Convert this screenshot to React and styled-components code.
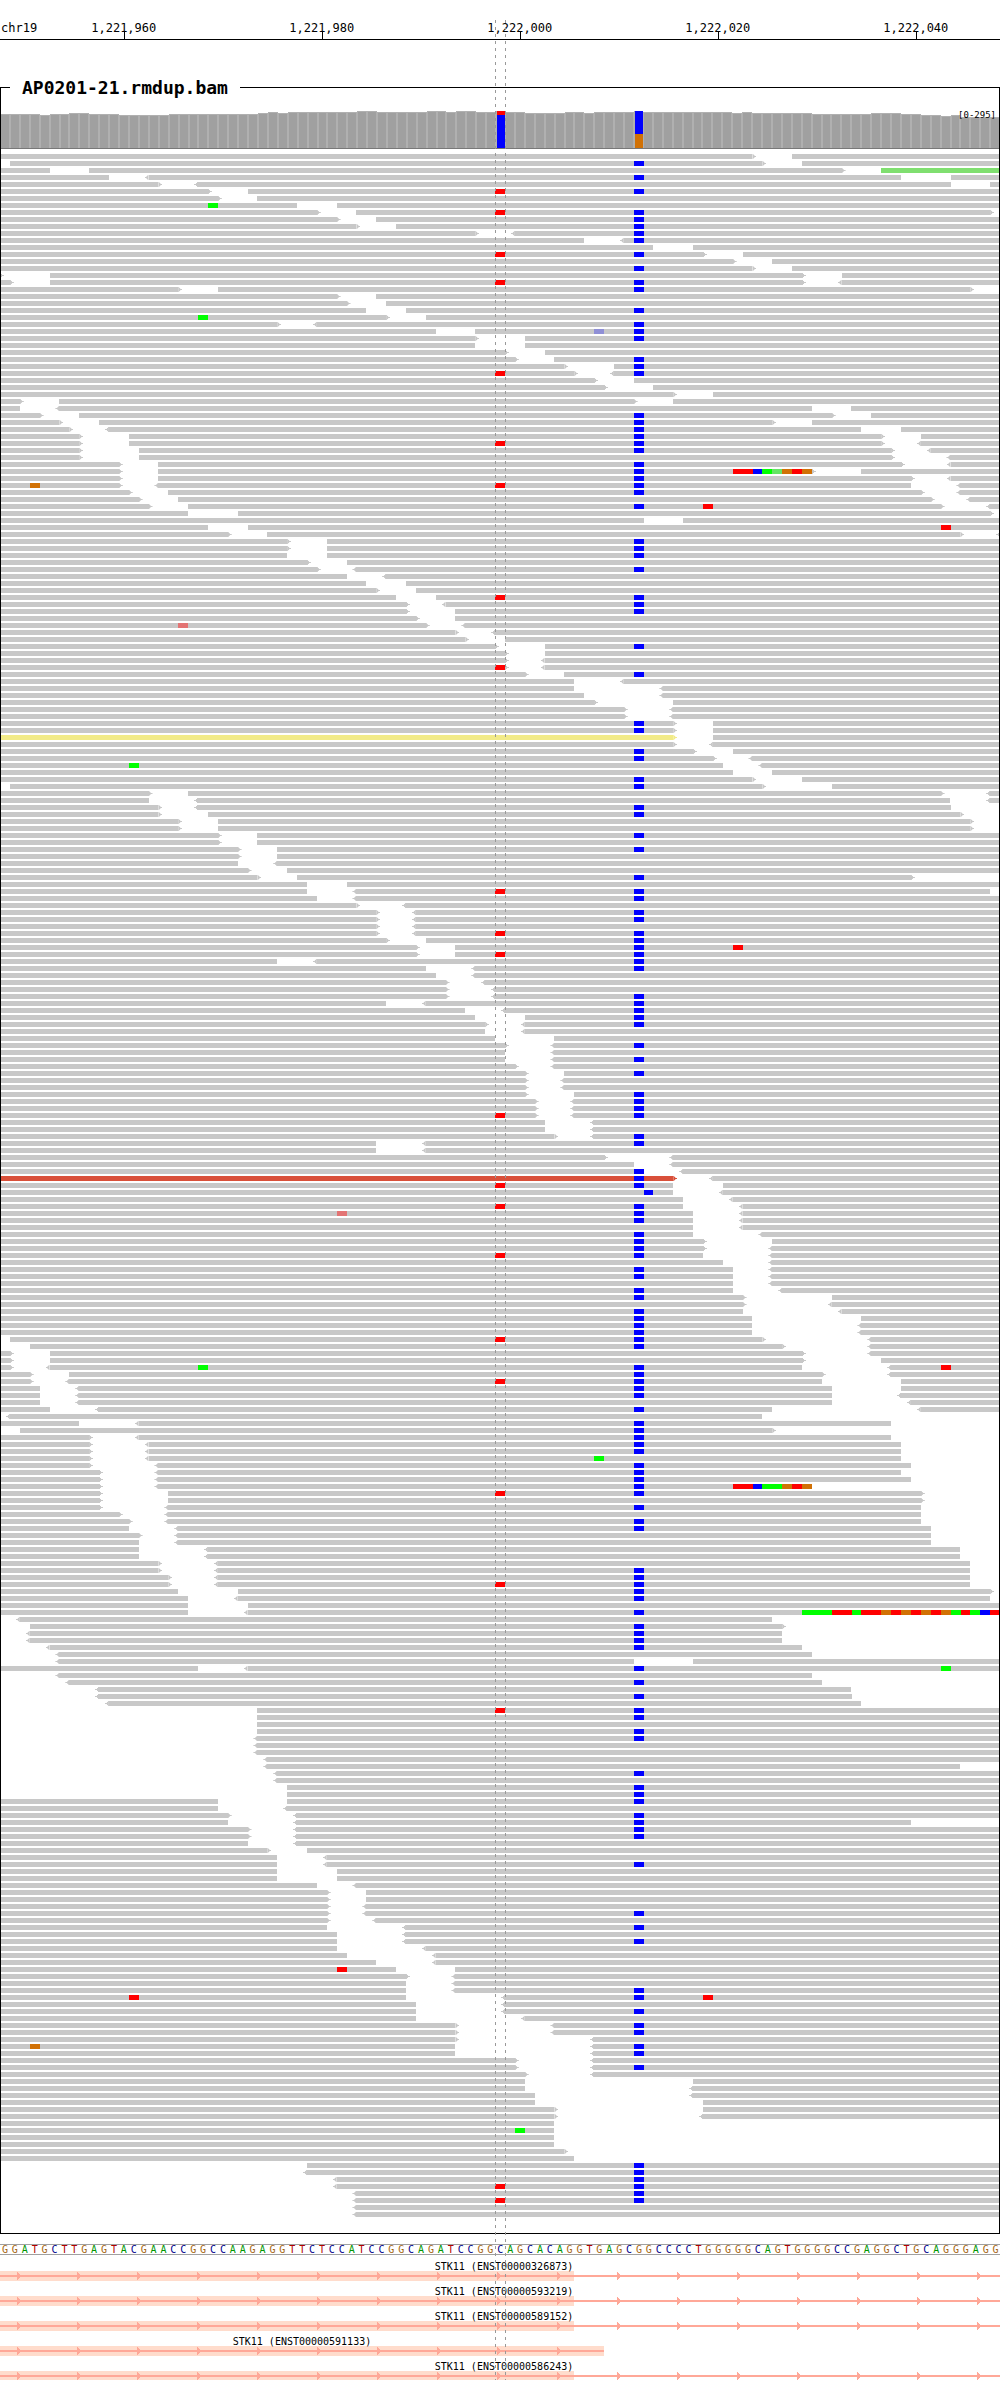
import React from "react";
import styled, { createGlobalStyle, css } from "styled-components";

const BASES = 101;
const percent = (bases) => `${(bases / BASES) * 100}%`;

const colors = {
  read: "#c8c8c8",
  a: "#00ff00",
  c: "#0000ff",
  g: "#d17105",
  t: "#ff0000",
  dimA: "#64e464",
  dimC: "#8f8fd6",
  dimT: "#e37474",
  pairGreen: "#80df70",
  pairYellow: "#f2eb88",
  pairRed: "#d9503a",
  intron: "#ffa898",
  exon: "#ffdccc",
};

const letterColors = { A: "#009600", C: "#00008b", G: "#a56510", T: "#b00000" };

/* ---------- data ---------- */

// One line per alignment row. "a-b" is an empty stretch from base a to base b;
// ">" marks a forward read ending there, "<" a reverse read starting there.
// "B" and "R" are the two recurrent variants; "x12" is a single mismatch.
const rowText = `
76>-80
0-1 77>-81 B
5-9 85>-89 P89-101
11-<15 91-96 B
16>-<20 96-100
21>-25 R B
22>-26
30-34 a21
32>-36 100>-101 R B
34>-38 B
36>-40 B
48>-<52 B
59-<63 B
66-70
71>-75 R B
74>-78
76>-80 B
0>-5 81>-85
1>-5 81>-<85 R B
18>-22 98>-101 B
34>-38
35>-39
37-41 B
39>-43 a20
28>-<32 B
44-48 C60 B
48>-53 B
48-53
51>-55
52>-56 B
57>-62 B
58>-<62 R B
60>-64
61>-66
68>-72
2>-6 64>-68
2-<6 82-86
4>-8 84>-88 B
6>-10 78>-82 B
7>-<11 87-91 B
8>-13 89>-93 B
8>-13 89>-<93 R B
8>-14 90>-<94 B
8>-14 90>-<96
12>-16 91>-<96 B
12>-16 82>-87 B t74 t75 c76 a77 A78 g79 t80 g81
12>-16 92>-<96 B
12>-<16 92-<97 g3 R B
13>-17 93>-<97 B
14>-18 94>-<98
15>-19 95>-<100 B t71
19-24 100>-101
65-69
21-25 t95
23>-27 97>-<101
29>-33 B
29>-33 B
29-33 B
31>-35
32>-<36 B
35-<39
37-41
38>-42
40-44 R B
41>-<45 B
41>-46 B
42>-46
43>-<47 T18
46>-<50
47>-51
50>-55 B
51>-55
51>-<55
51>-<55 R
53>-57 B
58-<63
58-<67
59-<67
60>-68
63>-<68
63>-<68
68>-72 B
68>-72 B
68>-72 Y0-68
68>-<72
70>-74 B
72>-<76 B
73-<77 a13
74-78
76>-81 B
0-1 77>-84 B
15>-19 95>-<100
15-<20 96-<100
16>-<20 96-101 B
16>-21 97>-101 B
18>-22 98>-101
18>-22 98>-101
22>-26 B
22>-26
24>-28 B
24>-28
24-<28
25>-29
26>-30 92>-101 B
31-35
31-<36 100-101 R B
32-<36 B
36>-<41
38>-<42 B
38>-<42 B
38>-<42
38>-<42 R B
39>-43 B
42>-46 B t74
42>-46 R B
28-<32 B
43-<48 B
44-<48
45>-<49
45>-<50
45>-<50 B
39-<43 B
47-<51 B
48-53 B
49>-<53 B
49-<53
50-56
51>-<56 B
51-<56
51-<56 B
52>-<56
53>-57 B
53>-<57
53>-<57
53>-58 B
54>-<58 B
54>-<58 B
54>-<58 R B
55-<60
55-<60
56>-<60 B
38-<43 B
38-<43
61>-<68
64-<68
65-<69 B
68>-<72 D0-68 B
68-73 R B
68-<73 c65
69-<74
69-<75 R B
70-<75 T34 B
70-<75 B
70-<75
70-<77 B
71>-78 B
71>-<78 B
71-<78 R B
73-<78
74-<78 B
74-<78 B
74-<78
74-<79 B
75>-84 B
75>-<84
75-<85 B
76-87 B
76-<87 B
76-<87 B
0-1 77>-<88 R B
0-3 79>-<88 B
1>-5 81>-<88
1>-5 81>-89
1>-<5 81-<90 a20 B t95
3>-7 83>-<90 B
3>-<7 83-91 R B
4-<8 84-91 B
4-<8 84-<91 B
4-<8 84-<92
5-<10 78-<93 B
0-<1 77-101
8-<14 90-101 B
0-2 78>-101 B
9>-<14 90-101 B
9>-<15 91-101 B
9>-<15 91-101 B
9>-<15 91-101 a60
9>-<16 92-101 B
10>-<16 91-101 B
10>-<16 92-101 B
10>-<16 82-101 B t74 t75 c76 a77 a78 g79 t80 g81
10>-17 93>-101 R B
10>-17 93>-101
10>-<17 93-101 B
12>-<17 93-101
13>-<17 93-101 B
13-<18 94-101 B
14>-<18 94-101
14-<18 94-101
14-<21 97-101
14-<21 97-101
16>-<22 98-101
16>-<22 98-101 B
17>-<22 98-101 B
17>-<22 98-101 R B
18-24 100>-101 B
19-<24 100-101 B
19-25
19-<25 B a81 a82 a83 t84 t85 a86 t87 t88 g89 t90 g91 t92 g93 t94 g95 a96 t97 a98 c99 t100
0-<2 78-101
0-3 79>-101 B
0-<3 79-101 B
0-<3 79-101 B
0-<5 81-101 B
0-<6 82-101
0-<6 64-70
20-<25 B a95
0-<6 82-101
0-<7 83-101 B
0-<10 86-101
0-<10 86-101 B
0-<11 87-101
0-26 R B
0-26 B
0-26
0-26 B
0-<26 B
0-<26
0-<26
0-<27
0-<27 97-101
0-<28 B
0-<28
0-29 B
0-29 B
22-29 B
22-<29
23>-<30 B
23-<30 92-101 B
25>-<30 B
25>-<30 B
25-<30
27>-31
28-<33
28-<33 B
28-34
28-34
32-<36
33>-37
33>-37
33>-<37
33>-<37 B
33>-<38
33-<41 B
34-<41
34-<41 B
34-<43
35-<44
38-<44
40-46 t34
41>-<46
41-<46
41-<46 B
41-<51 t13 B t71
42-<51
42-<51 B
42-<53
46>-<56 B
46>-<56 B
46>-<60
46-<60 g3 B
46-<60 B
52>-<60
52>-<60 B
53>-<60
53-70
53-<70
54-<70
54-71
56>-71
56>-<71
56-101
56-101 a52
56-101
56-101
57>-101
58-101
0-31 B
0-<31 B
0-<34 B
0-<34 R B
0-<36 B
0-<36 R B
0-<36
0-<36
`;

const markColors = {
  a: colors.a, c: colors.c, g: colors.g, t: colors.t,
  A: colors.dimA, C: colors.dimC, T: colors.dimT,
};
const readColors = { P: colors.pairGreen, Y: colors.pairYellow, D: colors.pairRed };

// Turns one line of rowText into consecutive pieces that fill the whole row.
function parseRow(line) {
  const gaps = [];
  const marks = {};
  const tints = [];
  line.split(" ").forEach((token) => {
    const gap = token.match(/^(\d+)(>?)-(<?)(\d+)$/);
    const tint = token.match(/^([PYD])(\d+)-(\d+)$/);
    if (gap) gaps.push({ from: +gap[1], to: +gap[4], forward: !!gap[2], reverse: !!gap[3] });
    else if (tint) tints.push({ color: readColors[tint[1]], from: +tint[2], to: +tint[3] });
    else if (token === "B") marks[64] = colors.c;
    else if (token === "R") marks[50] = colors.t;
    else marks[+token.slice(1)] = markColors[token[0]];
  });

  const pieces = [];
  const addRead = (from, to) => {
    if (to <= from) return;
    const tint = tints.find((t) => t.from === from && t.to === to);
    const fill = tint ? tint.color : colors.read;
    let start = from;
    for (let base = from; base < to; base += 1) {
      if (!marks[base]) continue;
      if (base > start) pieces.push({ bases: base - start, fill });
      pieces.push({ bases: 1, fill: marks[base] });
      start = base + 1;
    }
    if (to > start) pieces.push({ bases: to - start, fill });
  };

  let cursor = 0;
  gaps.forEach((gap) => {
    addRead(cursor, gap.from);
    const before = tints.find((t) => t.to === gap.from);
    pieces.push({
      bases: gap.to - gap.from,
      forward: gap.forward ? (before ? before.color : colors.read) : null,
      reverse: gap.reverse ? colors.read : null,
    });
    cursor = gap.to;
  });
  addRead(cursor, BASES);
  return pieces;
}

const rows = rowText.trim().split("\n").map(parseRow);

// [number of neighbouring bases, bar height]
const coverageRuns = [
  [4, 34], [1, 33], [2, 34], [2, 35], [3, 34], [5, 33], [9, 34], [1, 35], [1, 36], [1, 35],
  [7, 36], [2, 37], [5, 36], [2, 37], [1, 36], [2, 37], [2, 36], [1, 37], [2, 36], [4, 35],
  [2, 36], [1, 35], [4, 36], [1, 37], [9, 36], [1, 35], [1, 36], [6, 35], [6, 34], [3, 35],
  [2, 34], [2, 33], [1, 32], [1, 33], [4, 31],
];
const coverage = coverageRuns.flatMap(([count, height]) => Array(count).fill(height));
const variantCoverage = {
  50: [{ fill: colors.t, height: 4 }, { fill: colors.c, height: 33 }],
  64: [{ fill: colors.c, height: 23 }, { fill: colors.g, height: 14 }],
};

const ticks = ["1,221,960", "1,221,980", "1,222,000", "1,222,020", "1,222,040"];

const sequence =
  "GGATGCTTGAGTACGAACCGGCCAAGAGGTTCTCCATCCGGCAGATCCGGC" +
  "AGCACAGGTGAGCGGCCCCTGGGGGCAGTGGGGCCGAGGCTGCAGGGAGG";

const genes = [
  { id: "ENST00000326873", exonEnd: 58, end: BASES },
  { id: "ENST00000593219", exonEnd: 58, end: BASES },
  { id: "ENST00000589152", exonEnd: 58, end: BASES },
  { id: "ENST00000591133", exonEnd: 61, end: 61 },
  { id: "ENST00000586243", exonEnd: 58, end: BASES },
];

/* ---------- styles ---------- */

const GlobalStyle = createGlobalStyle`
  body {
    margin: 0;
    background: #fff;
    color: #000;
    font-family: "DejaVu Sans Mono", monospace;
  }
`;

const Browser = styled.main`
  position: relative;
`;

const Ruler = styled.header`
  display: flex;
  height: 39px;
  border-bottom: 1px solid #000;
  overflow: hidden;
  font-size: 12px;
  line-height: 8px;
`;

const Chromosome = styled.span`
  flex: 0 0 ${percent(2.5)};
  box-sizing: border-box;
  min-width: 0;
  padding: 24px 0 0 1px;
  white-space: nowrap;
`;

const RulerMark = styled.div`
  flex: 0 0 ${percent(20)};
  padding-top: 24px;
  text-align: center;

  &::after {
    content: "";
    display: block;
    height: 7px;
    margin-left: 50%;
    border-left: 1px solid #000;
  }
`;

const Track = styled.fieldset`
  min-width: 0;
  margin: 35px 0 0;
  padding: 0;
  border: 1px solid #000;
  overflow: hidden;
`;

const TrackName = styled.legend`
  margin-left: 9px;
  padding: 0 12px;
  font-size: 18px;
  font-weight: bold;
  line-height: 25px;
`;

const Coverage = styled.div`
  position: relative;
  display: flex;
  align-items: flex-end;
  height: 48px;
  margin: 0 -1px;
  border-bottom: 1px solid #787878;
`;

const CoverageColumn = styled.div`
  flex: 1 1 0;
  box-sizing: border-box;
  height: ${(p) => p.$height}px;
  ${(p) => !p.$plain && css`
    background: #a0a0a0;
    border: solid #b0b0b0;
    border-width: 1px 1px 0 1px;
  `}
  ${(p) => p.$plain && css`
    border-left: 1px solid #b0b0b0;
  `}
`;

const Allele = styled.div`
  height: ${(p) => p.$height}px;
  background: ${(p) => p.$fill};
`;

const CoverageRange = styled.span`
  position: absolute;
  top: 10px;
  right: 4px;
  font-size: 9px;
  line-height: 10px;
`;

const Reads = styled.div`
  display: flex;
  flex-direction: column;
  gap: 2px;
  margin: 0 -1px;
  padding: 5px 0 16px;
`;

const ReadRow = styled.div`
  display: flex;
  height: 5px;
`;

const Piece = styled.div`
  flex: ${(p) => p.$bases} 0 0;
  background: ${(p) => p.$fill};
`;

const Gap = styled.div`
  display: flex;
  flex: ${(p) => p.$bases} 0 0;
  justify-content: space-between;
  min-width: 0;

  &::before,
  &::after {
    content: "";
    flex: 0 0 4px;
  }
  &::before {
    background: ${(p) => p.$forward || "none"};
    clip-path: polygon(0 0, 1px 0, 1px 1px, 2px 1px, 2px 2px, 4px 2px, 4px 3px, 2px 3px, 2px 4px, 1px 4px, 1px 5px, 0 5px);
  }
  &::after {
    background: ${(p) => p.$reverse || "none"};
    clip-path: polygon(4px 0, 3px 0, 3px 1px, 2px 1px, 2px 2px, 0 2px, 0 3px, 2px 3px, 2px 4px, 3px 4px, 3px 5px, 4px 5px);
  }
`;

const Sequence = styled.div`
  display: flex;
  margin-top: 10px;
  border: solid #a0a0a0;
  border-width: 1px 0;
  font-size: 10px;
  font-weight: normal;
  line-height: 9px;
`;

const Nucleotide = styled.span`
  flex: 1 1 0;
  min-width: 0;
  color: ${(p) => letterColors[p.$base]};
  text-align: center;
`;

const Genes = styled.section`
  padding-top: 1px;
`;

const Gene = styled.div`
  width: ${(p) => percent(p.$bases)};
`;

const GeneName = styled.div`
  padding: 6px 0 0 ${(p) => (p.$open ? 8 : 0)}px;
  font-size: 10px;
  line-height: 9px;
  text-align: center;
`;

const Transcript = styled.div`
  height: 10px;
  background: linear-gradient(${colors.exon}, ${colors.exon}) no-repeat;
  background-size: ${(p) => (p.$exon / p.$total) * 100}% 100%;

  ${Gene}:last-child > & {
    height: 9px;
  }
`;

const Strand = styled.svg`
  display: block;
  width: 100%;
  height: 100%;
`;

const Guide = styled.div`
  position: absolute;
  top: 20px;
  bottom: 0;
  left: ${(p) => percent(p.$at)};
  width: 1px;
  background: repeating-linear-gradient(#999 0 3px, transparent 3px 7px);
`;

/* ---------- components ---------- */

function CoverageTrack() {
  return (
    <Coverage>
      {coverage.map((height, base) => {
        const alleles = variantCoverage[base];
        return (
          <CoverageColumn key={base} $height={height} $plain={!!alleles}>
            {alleles && alleles.map((a) => <Allele key={a.fill} $height={a.height} $fill={a.fill} />)}
          </CoverageColumn>
        );
      })}
      <CoverageRange>[0-295]</CoverageRange>
    </Coverage>
  );
}

function Alignments() {
  return (
    <Reads>
      {rows.map((pieces, row) => (
        <ReadRow key={row}>
          {pieces.map((piece, i) =>
            piece.fill ? (
              <Piece key={i} $bases={piece.bases} $fill={piece.fill} />
            ) : (
              <Gap key={i} $bases={piece.bases} $forward={piece.forward} $reverse={piece.reverse} />
            )
          )}
        </ReadRow>
      ))}
    </Reads>
  );
}

function GeneTrack() {
  return (
    <Genes>
      <svg width="0" height="0" style={{ display: "block" }} aria-hidden="true">
        <defs>
          <pattern id="strand" width="60" height="10" patternUnits="userSpaceOnUse">
            <g fill={colors.intron} shapeRendering="crispEdges">
              <rect y="4" width="60" height="2" />
              <path d="M17 1h1v1h1v1h1v4h-1v1h-1v1h-1z" />
            </g>
          </pattern>
        </defs>
      </svg>
      {genes.map((gene) => (
        <Gene key={gene.id} $bases={gene.end}>
          <GeneName $open={gene.end === BASES}>STK11 ({gene.id})</GeneName>
          <Transcript $exon={gene.exonEnd} $total={gene.end}>
            <Strand aria-hidden="true">
              <rect width="100%" height="100%" fill="url(#strand)" />
            </Strand>
          </Transcript>
        </Gene>
      ))}
    </Genes>
  );
}

export default function App() {
  return (
    <Browser>
      <GlobalStyle />
      <Ruler>
        <Chromosome>chr19</Chromosome>
        {ticks.map((label) => (
          <RulerMark key={label}>{label}</RulerMark>
        ))}
      </Ruler>
      <Track>
        <TrackName>AP0201-21.rmdup.bam</TrackName>
        <CoverageTrack />
        <Alignments />
      </Track>
      <Sequence>
        {sequence.split("").map((base, i) => (
          <Nucleotide key={i} $base={base}>{base}</Nucleotide>
        ))}
      </Sequence>
      <GeneTrack />
      <Guide $at={50} />
      <Guide $at={51} />
    </Browser>
  );
}
